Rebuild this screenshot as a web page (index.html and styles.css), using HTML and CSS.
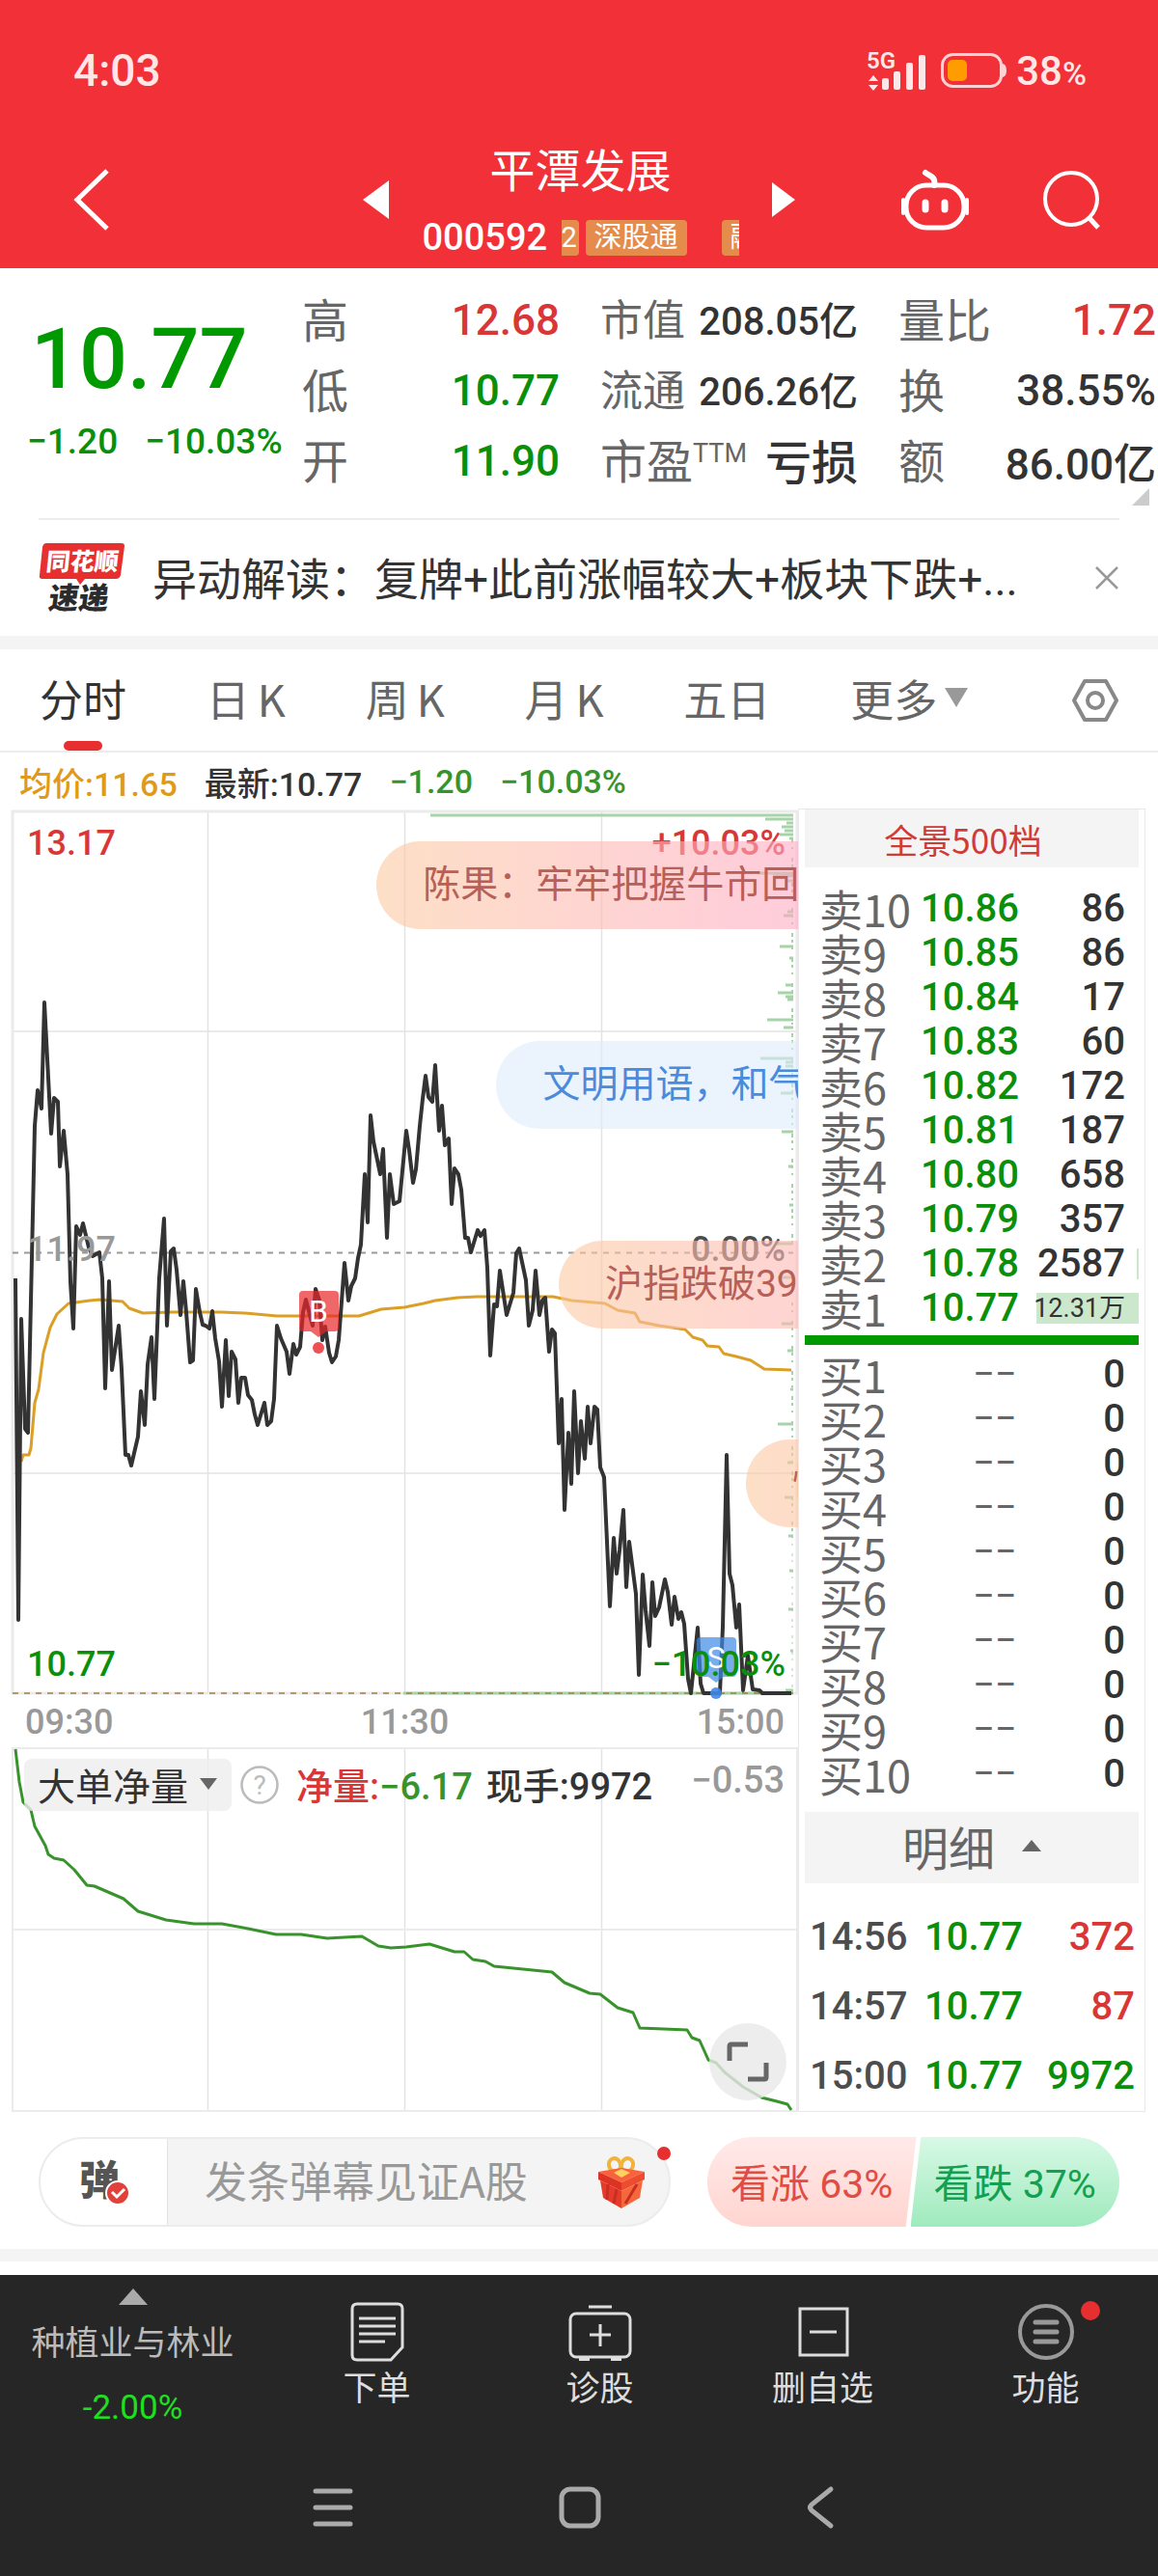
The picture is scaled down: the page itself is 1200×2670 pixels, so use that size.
FILE: index.html
```html
<!DOCTYPE html>
<html lang="zh-CN">
<head>
    <meta charset="UTF-8">
    <meta name="viewport" content="width=device-width, initial-scale=1.0">
    <title>平潭发展 000592</title>
    <link rel="stylesheet" href="styles.css">
</head>
<body>

    <!-- Header -->
    <header class="header">
        <div class="status-bar">
            <span class="clock">4:03</span>
            <div class="status-icons">
                <svg width="62" height="42" viewBox="0 0 62 42" fill="#ffe6e7">
                    <text x="0" y="19" font-size="24" font-weight="600">5G</text>
                    <path d="M7 26l5 6H2zM7 42l5-6H2z"/>
                    <rect x="16" y="29" width="7" height="12" rx="2"/>
                    <rect x="28" y="22" width="7" height="19" rx="2"/>
                    <rect x="41" y="13" width="7" height="28" rx="2"/>
                    <rect x="54" y="5" width="7" height="36" rx="2"/>
                </svg>
                <svg width="68" height="36" viewBox="0 0 68 36">
                    <rect x="1.500" y="1.500" width="61" height="33" rx="11" fill="none" stroke="#ffd3d5" stroke-width="3"/>
                    <rect x="7" y="7" width="20" height="22" rx="5" fill="#ff9d00"/>
                    <path d="M64 11q4 1 4 7t-4 7z" fill="#ffd3d5"/>
                </svg>
                <span class="battery">38<small>%</small></span>
            </div>
        </div>
        <div class="title-bar">
            <button class="icon-button" aria-label="返回">
                <svg width="38" height="66" viewBox="0 0 38 66"><path d="M35 3L4 33l31 30" fill="none" stroke="#fff" stroke-width="5"/></svg>
            </button>
            <div class="stock-switch">
                <button class="icon-button" aria-label="上一只">
                    <svg width="27" height="40" viewBox="0 0 27 40"><path d="M27 0v40L0 20z" fill="#fff"/></svg>
                </button>
                <div class="stock">
                    <h1>平潭发展</h1>
                    <div class="stock-code">
                        <span>000592</span>
                        <div class="tags">
                            <span class="tag tag-start">2</span>
                            <span class="tag">深股通</span>
                            <span class="tag tag-next">融</span>
                        </div>
                    </div>
                </div>
                <button class="icon-button" aria-label="下一只">
                    <svg width="24" height="36" viewBox="0 0 24 36"><path d="M0 0v36l24-18z" fill="#fff"/></svg>
                </button>
            </div>
            <div class="actions">
                <button class="icon-button" aria-label="智能助手">
                    <svg width="70" height="66" viewBox="0 0 70 66" fill="none" stroke="#fff" stroke-width="5">
                        <rect x="5" y="18" width="60" height="44" rx="21"/>
                        <path d="M34 18c2-9-4-9-9-13" stroke-width="6" stroke-linecap="round"/>
                        <path d="M2 33v14M68 33v14" stroke-width="4" stroke-linecap="round"/>
                        <path d="M25 36v7M45 36v7" stroke-width="7" stroke-linecap="round"/>
                    </svg>
                </button>
                <button class="icon-button" aria-label="搜索">
                    <svg width="62" height="62" viewBox="0 0 62 62" fill="none" stroke="#fff" stroke-width="4">
                        <circle cx="30" cy="30" r="27"/>
                        <path d="M48 49l10 11" stroke-width="5"/>
                    </svg>
                </button>
            </div>
        </div>
    </header>

    <!-- Quote -->
    <section class="quote">
        <div class="price-box">
            <div class="price">10.77</div>
            <div class="change"><span>−1.20</span><span>−10.03%</span></div>
        </div>
        <dl class="stats">
            <div><dt>高</dt><dd class="up">12.68</dd></div>
            <div><dt>低</dt><dd class="down">10.77</dd></div>
            <div><dt>开</dt><dd class="down">11.90</dd></div>
        </dl>
        <dl class="stats stats-value">
            <div><dt>市值</dt><dd>208.05亿</dd></div>
            <div><dt>流通</dt><dd>206.26亿</dd></div>
            <div><dt class="large">市盈<sup>TTM</sup></dt><dd class="large">亏损</dd></div>
        </dl>
        <dl class="stats">
            <div><dt>量比</dt><dd class="up">1.72</dd></div>
            <div><dt>换</dt><dd>38.55%</dd></div>
            <div><dt>额</dt><dd>86.00亿</dd></div>
        </dl>
        <svg class="corner" width="18" height="18" viewBox="0 0 18 18"><path d="M18 0v18H0z" fill="#ccc"/></svg>
    </section>

    <!-- News -->
    <section class="news">
        <svg class="news-logo" width="90" height="74" viewBox="0 0 90 74">
            <path d="M8 1h78q3 0 3 3l-4 30q-1 4-5 4H48l-5 6-4-6H4q-4 0-3-4L4 5q1-4 4-4z" fill="#e72f2f"/>
            <text x="10" y="29" font-size="25" font-weight="900" fill="#fff" transform="skewX(-6)" class="cjk">同花顺</text>
            <text x="19" y="69" font-size="31" font-weight="900" fill="#2b2b2b" transform="skewX(-8)" class="cjk">速递</text>
        </svg>
        <a href="#" class="news-title">异动解读：复牌+此前涨幅较大+板块下跌+...</a>
        <button class="icon-button" aria-label="关闭">
            <svg width="26" height="26" viewBox="0 0 26 26"><path d="M2 2l22 22M24 2L2 24" stroke="#999" stroke-width="2.500"/></svg>
        </button>
    </section>

    <!-- Period tabs -->
    <nav class="tabs">
        <button class="tab active">分时</button>
        <button class="tab">日<span>K</span></button>
        <button class="tab">周<span>K</span></button>
        <button class="tab">月<span>K</span></button>
        <button class="tab">五日</button>
        <button class="tab">更多<svg width="24" height="20" viewBox="0 0 24 20"><path d="M0 0h24L12 20z" fill="#999"/></svg></button>
        <button class="icon-button settings" aria-label="设置">
            <svg width="50" height="46" viewBox="0 0 50 46" fill="none" stroke="#888" stroke-width="4" stroke-linejoin="round">
                <path d="M14 3h22l11 20-11 20H14L3 23z"/>
                <circle cx="25" cy="23" r="8"/>
            </svg>
        </button>
    </nav>

    <main class="board">

        <!-- Charts -->
        <div class="charts">
            <div class="legend">
                <span class="average">均价:11.65</span>
                <span>最新:10.77</span>
                <span class="fall">−1.20</span>
                <span class="fall">−10.03%</span>
            </div>

            <div class="chart">
                <svg viewBox="0 840 827 918">
                    <g fill="none" stroke="#e3e3e3" stroke-width="1.500">
                        <path d="M215.500 841V1755M419.500 841V1755M623.500 841V1755M13 1069H826M13 1527H826"/>
                        <path d="M13 841H826V1755H13z" stroke="#ebebeb" stroke-width="3"/>
                    </g>
                    <path d="M13 1298.500H822" stroke="#999" stroke-width="2" stroke-dasharray="6 6"/>

                    <!-- Volume by price -->
                    <g stroke="#a6d3a8" stroke-width="3" fill="none">
                        <path d="M446 845h376M793 849h29M815 853h7M810 857h12M813 861h9M808 865h14M818 869h4M786 905h36M801 908h21M816 913h6M816 945h6M812 949h10M808 981h14M818 993h4M814 1021h8M806 1029h16M814 1033h8M816 1036h6M795 1057h27M812 1065h10M788 1097h34M814 1101h8M814 1105h8M805 1116h17M809 1133h13M810 1173h12M817 1209h5M818 1249h4M803 1289h19M806 1324h16M810 1372h12M816 1400h6M819 1440h3M806 1476h16M816 1516h6M813 1552h9M817 1592h5M818 1628h4M817 1668h5M819 1711h3M814 1752h8M418 1755h404"/>
                        <path d="M821 870V1290M821 1350V1600" stroke-width="2" stroke-dasharray="3 5 2 9 4 3"/>
                        <path d="M821 1600V1755" stroke-width="1" stroke-dasharray="2 8 3 4"/>
                    </g>
                    <path d="M13 1755H822" stroke="#9c7a33" stroke-width="2" stroke-dasharray="6 6" opacity="0.700"/>

                    <polyline class="line-average" points="22,1515 24,1508 30,1508 32,1501 36,1454 40,1440 45,1402 52,1376 59,1362 71,1351 93,1348 104,1347 127,1349 134,1356 148,1361 178,1360 229,1360 253,1361 287,1364 372,1364 395,1357 419,1355 439,1351 451,1348 474,1345 494,1344 573,1344 593,1348 627,1351 640,1358 658,1361 663,1370 683,1374 710,1378 718,1386 728,1389 733,1395 745,1396 750,1403 763,1406 778,1410 792,1419 820,1420"/>
                    <polyline class="line-price" points="16,1325 19,1679 22,1367 26,1481 29,1485 36,1167 39,1130 43,1149 46,1039 53,1175 56,1138 60,1142 62,1209 66,1172 70,1217 73,1329 76,1377 79,1271 83,1280 86,1268 92,1293 96,1302 103,1298 106,1325 109,1439 113,1328 116,1420 123,1374 126,1419 130,1508 133,1508 136,1519 143,1489 146,1442 150,1477 153,1414 157,1386 160,1450 165,1325 170,1263 173,1374 177,1297 180,1294 183,1316 187,1363 190,1328 193,1360 197,1412 200,1410 203,1336 207,1360 210,1373 213,1374 217,1377 220,1359 223,1387 227,1411 230,1458 234,1389 237,1447 240,1401 244,1409 247,1454 250,1428 254,1428 257,1446 261,1451 264,1466 267,1477 274,1454 277,1477 281,1473 284,1450 287,1374 291,1387 297,1401 300,1424 304,1393 307,1404 311,1396 314,1360 317,1347 321,1363 324,1374 327,1336 331,1348 334,1389 337,1375 341,1402 344,1412 348,1406 351,1389 357,1309 361,1348 364,1333 368,1325 371,1304 374,1290 378,1217 381,1267 384,1156 387,1183 394,1217 397,1191 401,1283 404,1217 408,1248 414,1245 421,1172 424,1192 428,1226 431,1212 435,1167 438,1139 441,1115 444,1137 448,1142 451,1104 455,1172 458,1146 461,1187 465,1180 468,1248 471,1211 475,1217 478,1233 482,1283 485,1283 488,1298 495,1275 498,1281 502,1275 505,1314 508,1405 512,1352 515,1354 518,1317 525,1363 532,1340 535,1299 538,1294 545,1327 548,1374 552,1358 555,1317 559,1363 562,1348 565,1345 569,1401 572,1378 575,1382 579,1496 582,1450 585,1565 589,1485 592,1538 595,1442 599,1527 602,1473 606,1512 609,1458 612,1496 616,1458 619,1461 622,1521 626,1531 632,1665 636,1594 639,1631 642,1607 646,1565 649,1645 652,1598 659,1652 662,1736 666,1632 669,1669 673,1706 676,1640 679,1675 683,1666 689,1637 692,1650 696,1684 699,1655 703,1678 706,1671 709,1683 713,1740 716,1755 723,1687 726,1745 729,1755 746,1755 749,1686 753,1508 756,1631 759,1643 763,1687 766,1663 770,1752 775,1716 780,1751 787,1752 790,1755 820,1755"/>

                    <!-- Buy and sell markers -->
                    <g fill="#e8262a">
                        <path d="M314 1338h33q4 0 4 4v34q0 4-4 4h-9l-8 6-8-6h-8q-4 0-4-4v-34q0-4 4-4z" opacity="0.700"/>
                        <circle cx="330" cy="1397" r="6" opacity="0.800"/>
                    </g>
                    <text x="330" y="1370" font-size="32" text-anchor="middle" fill="#fff">B</text>
                    <g fill="#3f8ae6">
                        <path d="M726 1697h33q4 0 4 4v33q0 4-4 4h-9l-8 6-8-6h-8q-4 0-4-4v-33q0-4 4-4z" opacity="0.700"/>
                        <circle cx="742" cy="1755" r="6" opacity="0.900"/>
                    </g>
                    <text x="742" y="1729" font-size="32" text-anchor="middle" fill="#fff">S</text>

                    <g class="axis">
                        <text x="28" y="886" fill="#d93636">13.17</text>
                        <text x="28" y="1307" fill="#999">11.97</text>
                        <text x="28" y="1737" fill="#0a8f0a">10.77</text>
                        <text x="814" y="886" fill="#d93636" text-anchor="end">+10.03%</text>
                        <text x="814" y="1307" fill="#4d4d4d" text-anchor="end">0.00%</text>
                        <text x="814" y="1737" fill="#0a8f0a" text-anchor="end">−10.03%</text>
                    </g>
                </svg>
                <div class="bullets">
                    <span class="bullet bullet-1">陈果：牢牢把握牛市回</span>
                    <span class="bullet bullet-2">文明用语，和气</span>
                    <span class="bullet bullet-3">沪指跌破39</span>
                    <span class="bullet bullet-4">情</span>
                </div>
            </div>

            <div class="times"><span>09:30</span><span>11:30</span><span>15:00</span></div>

            <div class="chart">
                <svg viewBox="0 1811 827 378">
                    <g fill="none" stroke="#e3e3e3" stroke-width="1.500">
                        <path d="M215.500 1812V2188M419.500 1812V2188M623.500 1812V2188"/>
                        <path d="M13 2000H826M13 1812H826V2188H13z" stroke="#ebebeb" stroke-width="2"/>
                    </g>
                    <polyline class="line-flow" points="16,1813 20,1847 24,1868 32,1876 36,1893 47,1913 50,1922 56,1926 66,1928 77,1938 90,1954 98,1955 128,1968 143,1981 172,1990 201,1994 230,1994 257,1999 286,2005 312,2005 339,2009 375,2007 392,2017 405,2019 421,2018 445,2015 471,2023 481,2023 490,2031 503,2033 512,2038 572,2044 585,2055 611,2066 622,2067 640,2081 656,2086 663,2102 712,2104 717,2112 725,2115 734,2135 742,2138 751,2148 770,2163 789,2174 805,2178 816,2181 820,2187"/>
                </svg>
                <div class="flow-info">
                    <button class="picker">大单净量<svg width="18" height="12" viewBox="0 0 18 12"><path d="M0 0h18L9 12z" fill="#666"/></svg></button>
                    <button class="icon-button" aria-label="说明">
                        <svg width="40" height="40" viewBox="0 0 40 40">
                            <circle cx="20" cy="20" r="18.500" fill="none" stroke="#bbb" stroke-width="2.500"/>
                            <text x="20" y="30" font-size="28" text-anchor="middle" fill="#bbb">?</text>
                        </svg>
                    </button>
                    <span class="flow-net"><span class="up">净量:</span><span class="fall">−6.17</span></span>
                    <span>现手:9972</span>
                    <span class="flow-max">−0.53</span>
                </div>
                <button class="expand" aria-label="全屏">
                    <svg width="44" height="42" viewBox="0 0 44 42" fill="none" stroke="#666" stroke-width="5"><path d="M3 20V5q0-2 2-2h17M41 22v15q0 2-2 2H22"/></svg>
                </button>
            </div>
        </div>

        <!-- Order book -->
        <aside class="book">
            <button class="book-head depth">全景500档</button>
            <table class="orders">
                <tr><th>卖10</th><td class="down">10.86</td><td>86</td></tr>
                <tr><th>卖9</th><td class="down">10.85</td><td>86</td></tr>
                <tr><th>卖8</th><td class="down">10.84</td><td>17</td></tr>
                <tr><th>卖7</th><td class="down">10.83</td><td>60</td></tr>
                <tr><th>卖6</th><td class="down">10.82</td><td>172</td></tr>
                <tr><th>卖5</th><td class="down">10.81</td><td>187</td></tr>
                <tr><th>卖4</th><td class="down">10.80</td><td>658</td></tr>
                <tr><th>卖3</th><td class="down">10.79</td><td>357</td></tr>
                <tr><th>卖2</th><td class="down">10.78</td><td class="sliver">2587</td></tr>
                <tr><th>卖1</th><td class="down">10.77</td><td class="filled">12.31万</td></tr>
            </table>
            <div class="divider"></div>
            <table class="orders bids">
                <tr><th>买1</th><td>−−</td><td>0</td></tr>
                <tr><th>买2</th><td>−−</td><td>0</td></tr>
                <tr><th>买3</th><td>−−</td><td>0</td></tr>
                <tr><th>买4</th><td>−−</td><td>0</td></tr>
                <tr><th>买5</th><td>−−</td><td>0</td></tr>
                <tr><th>买6</th><td>−−</td><td>0</td></tr>
                <tr><th>买7</th><td>−−</td><td>0</td></tr>
                <tr><th>买8</th><td>−−</td><td>0</td></tr>
                <tr><th>买9</th><td>−−</td><td>0</td></tr>
                <tr><th>买10</th><td>−−</td><td>0</td></tr>
            </table>
            <button class="book-head detail">明细<svg width="20" height="12" viewBox="0 0 20 12"><path d="M10 0l10 12H0z" fill="#666"/></svg></button>
            <table class="trades">
                <tr><td>14:56</td><td class="down">10.77</td><td class="up">372</td></tr>
                <tr><td>14:57</td><td class="down">10.77</td><td class="up">87</td></tr>
                <tr><td>15:00</td><td class="down">10.77</td><td class="down">9972</td></tr>
            </table>
        </aside>
    </main>

    <!-- Comment bar -->
    <section class="social">
        <div class="comment">
            <button class="comment-toggle" aria-label="弹幕开关">
                <svg width="52" height="50" viewBox="0 0 52 50">
                    <text x="0" y="38" font-size="42" font-weight="900" fill="#555" class="cjk">弹</text>
                    <circle cx="40" cy="36" r="12" fill="#e2403a" stroke="#fff" stroke-width="2"/>
                    <path d="M34 35l5 5 8-8" fill="none" stroke="#fff" stroke-width="3"/>
                </svg>
            </button>
            <input type="text" placeholder="发条弹幕见证A股" aria-label="弹幕">
            <button class="icon-button" aria-label="礼物">
                <svg width="50" height="54" viewBox="0 0 50 54">
                    <g fill="none" stroke="#f2b33a" stroke-width="4">
                        <ellipse cx="18" cy="9" rx="6" ry="7" transform="rotate(-18 18 9)"/>
                        <ellipse cx="31" cy="9" rx="6" ry="7" transform="rotate(18 31 9)"/>
                    </g>
                    <path d="M1 16l24-4 24 4-24 11z" fill="#f9623f"/>
                    <path d="M1 16l24 11v9L1 24z" fill="#dd3324"/>
                    <path d="M49 16L25 27v9l24-12z" fill="#ee4c2e"/>
                    <path d="M3 25l22 11v18L6 43z" fill="#e63a2b"/>
                    <path d="M47 25L25 36v18l19-11z" fill="#f4693c"/>
                    <path d="M11 29l-1 16M20 34l-3 15M41 29L29 49" stroke="#c92d23" stroke-width="3"/>
                    <path d="M17 17l8-4 9 4-9 5z" fill="#ffd25e"/>
                </svg>
            </button>
            <span class="dot"></span>
        </div>
        <div class="vote">
            <button class="vote-up">看涨 63%</button>
            <button class="vote-down">看跌 37%</button>
        </div>
    </section>

    <!-- Bottom menu -->
    <footer class="footer">
        <nav class="menu">
            <a href="#" class="sector">
                <svg width="30" height="17" viewBox="0 0 30 17"><path d="M15 0l15 17H0z" fill="#aaa"/></svg>
                <span>种植业与林业</span>
                <span class="sector-change">-2.00%</span>
            </a>
            <a href="#">
                <svg width="62" height="62" viewBox="0 0 62 62" fill="none" stroke="#ddd" stroke-width="3">
                    <path d="M10 2h42q5 0 5 5v40L45 60H10q-5 0-5-5V7q0-5 5-5z"/>
                    <path d="M12 17h38M12 25h38M12 33h38M12 41h27"/>
                </svg>
                <span>下单</span>
            </a>
            <a href="#">
                <svg width="66" height="62" viewBox="0 0 66 62" fill="none" stroke="#ddd" stroke-width="3">
                    <rect x="2" y="12" width="62" height="45" rx="6"/>
                    <path d="M21 5h24M33 23v23M22 34h22"/>
                    <path d="M11 59h11M44 59h11" stroke-width="4"/>
                </svg>
                <span>诊股</span>
            </a>
            <a href="#">
                <svg width="62" height="62" viewBox="0 0 62 62" fill="none" stroke="#ddd" stroke-width="3">
                    <path d="M7 7h49v48H7zM17 31h28"/>
                </svg>
                <span>删自选</span>
            </a>
            <a href="#">
                <svg width="62" height="62" viewBox="0 0 62 62" fill="none" stroke="#999" stroke-width="4">
                    <circle cx="31" cy="31" r="27"/>
                    <path d="M20 21h22M20 31h22M20 41h22" stroke-width="5" stroke-linecap="round"/>
                </svg>
                <span>功能</span>
                <i class="dot"></i>
            </a>
        </nav>
        <div class="system-nav">
            <button class="icon-button" aria-label="最近任务">
                <svg width="42" height="42" viewBox="0 0 42 42"><path d="M3 4h36M3 21h36M3 38h36" stroke="#aaa" stroke-width="5" stroke-linecap="round"/></svg>
            </button>
            <button class="icon-button" aria-label="主屏幕">
                <svg width="44" height="44" viewBox="0 0 44 44"><rect x="3" y="3" width="38" height="38" rx="9" fill="none" stroke="#aaa" stroke-width="5"/></svg>
            </button>
            <button class="icon-button" aria-label="后退">
                <svg width="28" height="44" viewBox="0 0 28 44"><path d="M25 3L5 19q-3 3 0 6l20 16" fill="none" stroke="#aaa" stroke-width="5" stroke-linecap="round"/></svg>
            </button>
        </div>
    </footer>

</body>
</html>
```

FILE: styles.css
```css
* {
    box-sizing: border-box;
}

body {
    margin: 0;
    font-family: Roboto, "Noto Sans CJK SC", sans-serif;
    color: #333;
    background-color: #fff;
}

button {
    padding: 0;
    border: none;
    background: none;
    font-family: inherit;
    color: inherit;
    cursor: pointer;
}

a {
    color: inherit;
    text-decoration: none;
}

svg {
    display: block;
    flex: none;
    overflow: visible;
}

table {
    border-collapse: collapse;
    width: 100%;
}

.cjk {
    font-family: "Noto Sans CJK SC", sans-serif;
}

.up {
    color: #d93636;
}

.down {
    color: #0a8f0a;
}

.fall {
    color: #38932c;
}

.icon-button {
    display: flex;
    flex: none;
}

.dot {
    position: absolute;
    border-radius: 50%;
    background-color: #e72f2f;
}

/* Header */
.header {
    background-color: #f13038;
    color: #fff;
}

.status-bar {
    display: flex;
    justify-content: space-between;
    align-items: center;
    height: 146px;
    padding: 0 74px 0 76px;
    color: #ffe6e7;
}

.clock {
    font-size: 46px;
    font-weight: 500;
}

.status-icons {
    display: flex;
    align-items: center;
    gap: 15px;
}

.battery {
    margin-left: -5px;
    font-size: 42px;
    font-weight: 500;
}

.battery small {
    font-size: 34px;
}

.title-bar {
    display: grid;
    grid-template-columns: 1fr 448px 1fr;
    align-items: center;
    height: 132px;
    padding-bottom: 16px;
}

.title-bar > .icon-button {
    padding-left: 76px;
}

.stock-switch {
    display: flex;
    justify-content: space-between;
    align-items: center;
}

.stock {
    width: 328px;
}

.stock h1 {
    margin: 0 0 14px;
    font-size: 47px;
    font-weight: 400;
    line-height: 64px;
    text-align: center;
}

.stock-code {
    display: flex;
    align-items: center;
    justify-content: space-between;
    height: 44px;
    font-size: 38px;
    font-weight: 500;
}

.tags {
    display: flex;
    gap: 7px;
    width: 184px;
    overflow: hidden;
}

.tag {
    flex: none;
    height: 37px;
    padding: 0 9px;
    border-radius: 4px;
    background-color: #e58c4c;
    font-size: 29px;
    font-weight: 400;
    line-height: 36px;
}

.tag-start {
    width: 18px;
    padding: 0;
    border-radius: 0 4px 4px 0;
}

.tag-next {
    margin-left: 29px;
}

.actions {
    display: flex;
    justify-content: flex-end;
    align-items: center;
    gap: 76px;
    padding-right: 58px;
}

/* Quote */
.quote {
    position: relative;
    display: grid;
    grid-template-columns: 271px 1fr 1fr 1fr;
    column-gap: 42px;
    height: 261px;
    padding: 17px 2px 0 0;
}

.quote::after {
    content: "";
    position: absolute;
    left: 40px;
    right: 40px;
    bottom: 0;
    height: 2px;
    background-color: #ececec;
}

.price-box {
    white-space: nowrap;
    color: #0a8f0a;
}

.price {
    padding: 26px 0 0 32px;
    font-size: 88px;
    font-weight: 500;
    line-height: 102px;
    color: #009900;
}

.change {
    display: flex;
    gap: 28px;
    padding: 12px 0 0 28px;
    font-size: 37px;
    font-weight: 500;
    line-height: 46px;
}

.stats {
    margin: 0;
}

.stats div {
    display: flex;
    justify-content: space-between;
    align-items: center;
    height: 73px;
    white-space: nowrap;
}

.stats dt {
    padding-bottom: 5px;
    font-size: 48px;
    color: #666;
}

.stats dd {
    margin: 0;
    font-size: 44px;
    font-weight: 500;
}

.stats-value dt {
    font-size: 44px;
}

.stats-value dd {
    padding-bottom: 3px;
    font-size: 40px;
}

.stats .large {
    font-size: 48px;
}

.stats sup {
    font-size: 27px;
    line-height: 0;
}

.corner {
    position: absolute;
    right: 9px;
    bottom: 15px;
}

/* News */
.news {
    display: flex;
    align-items: center;
    height: 120px;
    padding: 0 40px;
}

.news-title {
    flex: 1;
    padding: 0 0 5px 28px;
    font-size: 46px;
    white-space: nowrap;
}

/* Tabs */
.tabs {
    display: flex;
    justify-content: space-between;
    align-items: center;
    height: 121px;
    padding: 0 40px 0 41px;
    border-top: 14px solid #f4f4f4;
    border-bottom: 2px solid #ececec;
}

.tab {
    position: relative;
    display: flex;
    align-items: center;
    gap: 8px;
    height: 100%;
    padding-bottom: 5px;
    font-family: "Noto Sans CJK SC", sans-serif;
    font-size: 45px;
    color: #666;
}

.tab.active {
    color: #333;
}

.tab.active::after {
    content: "";
    position: absolute;
    left: 25px;
    right: 25px;
    bottom: 0;
    height: 10px;
    border-radius: 5px;
    background-color: #e72f2f;
}

.settings {
    margin-left: 24px;
}

/* Board */
.board {
    display: grid;
    grid-template-columns: 827fr 360fr;
    padding-right: 13px;
}

.legend {
    display: flex;
    align-items: center;
    gap: 28px;
    height: 60px;
    padding-left: 20px;
    font-size: 34px;
    font-weight: 500;
}

.average {
    color: #e09a18;
}

.chart {
    position: relative;
}

.chart > svg {
    width: 100%;
}

.line-price,
.line-average,
.line-flow {
    fill: none;
    stroke-width: 4;
    stroke-linejoin: round;
}

.line-price {
    stroke: #333;
}

.line-average {
    stroke: #dc9f26;
    stroke-width: 3;
}

.line-flow {
    stroke: #38932c;
    stroke-width: 3;
}

.axis {
    font-size: 36px;
    font-weight: 500;
}

/* Scrolling comments over the chart */
.bullets {
    position: absolute;
    top: 0;
    right: 0;
    bottom: 0;
    left: 0;
    overflow: hidden;
}

.bullet {
    position: absolute;
    padding: 0 48px;
    border-radius: 46px;
    font-size: 39px;
    line-height: 91px;
    white-space: nowrap;
    color: #b85f58;
    background-image: linear-gradient(90deg, rgba(252, 201, 160, 0.6), rgba(255, 170, 196, 0.6) 440px);
}

.bullet-1 {
    top: 3.5%;
    left: 47.2%;
}

.bullet-2 {
    top: 26%;
    left: 62.2%;
    color: #4a8bdc;
    background: rgba(222, 235, 252, 0.6);
}

.bullet-3 {
    top: 48.6%;
    left: 70%;
}

.bullet-4 {
    top: 71%;
    left: 93.5%;
}

.times {
    display: flex;
    justify-content: space-between;
    align-items: center;
    height: 53px;
    padding: 0 14px 0 26px;
    font-size: 36px;
    font-weight: 500;
    color: #999;
}

.flow-info {
    position: absolute;
    top: 12px;
    left: 25px;
    right: 14px;
    display: flex;
    align-items: center;
    height: 54px;
    font-size: 38px;
    font-weight: 500;
    white-space: nowrap;
}

.flow-info > span {
    padding-bottom: 4px;
}

.picker {
    display: flex;
    align-items: center;
    gap: 12px;
    height: 54px;
    margin-right: 9px;
    padding: 0 15px 3px 14px;
    border-radius: 8px;
    background-color: rgba(238, 238, 238, 0.8);
    font-size: 39px;
}

.flow-net {
    margin: 0 14px 0 18px;
}

.flow-info .flow-max {
    margin-left: auto;
    padding-bottom: 10px;
    color: #999;
}

.expand {
    position: absolute;
    right: 12px;
    bottom: 12px;
    display: flex;
    justify-content: center;
    align-items: center;
    width: 80px;
    height: 80px;
    border-radius: 50%;
    background-color: rgba(232, 232, 232, 0.8);
}

/* Order book */
.book {
    margin-top: 58px;
    padding: 0 6px;
    border: 1px solid #e8e8e8;
}

.book-head {
    display: flex;
    justify-content: center;
    align-items: center;
    width: 100%;
    background-color: #f4f4f4;
}

.depth {
    height: 60px;
    margin-bottom: 20px;
    padding: 0 18px 0 0;
    font-family: "Noto Sans CJK SC", sans-serif;
    font-size: 35px;
    color: #cf3b35;
}

.detail {
    gap: 28px;
    height: 74px;
    margin: 16px 0 19px;
    padding-bottom: 4px;
    font-size: 48px;
    color: #666;
}

.orders tr {
    height: 46px;
}

.orders th,
.orders td {
    padding: 0;
    line-height: 46px;
}

.orders th {
    width: 120px;
    padding-left: 15px;
    font-family: "Noto Sans CJK SC", sans-serif;
    font-size: 45px;
    font-weight: 400;
    text-align: left;
    color: #666;
}

.orders td {
    font-size: 40px;
    font-weight: 500;
    text-align: right;
}

.orders td:nth-child(2) {
    width: 100px;
}

.orders td:last-child {
    padding-right: 14px;
}

.orders .sliver,
.orders .filled {
    background: linear-gradient(#cce8cc, #cce8cc) right center / 2px 32px no-repeat;
}

.orders .filled {
    background-size: 106px 32px;
    font-size: 27px;
    font-weight: 400;
}

.bids td:nth-child(2) {
    font-weight: 400;
    color: #666;
}

.divider {
    height: 10px;
    margin: 5px 0 8px;
    background-color: #009900;
}

.trades td {
    height: 72px;
    padding: 0 4px 0 5px;
    font-size: 40px;
    font-weight: 500;
}

.trades td:first-child {
    color: #4d4d4d;
}

.trades td:last-child {
    text-align: right;
}

/* Comment bar */
.social {
    display: flex;
    justify-content: space-between;
    height: 155px;
    padding: 26px 40px 23px;
    border-bottom: 13px solid #f4f4f4;
}

.comment {
    position: relative;
    display: flex;
    align-items: center;
    flex: 0 1 655px;
    min-width: 0;
    padding-right: 24px;
    border: 2px solid #ececec;
    border-radius: 47px;
    background-color: #f4f4f4;
}

.comment-toggle {
    display: flex;
    flex: none;
    align-items: center;
    justify-content: center;
    width: 132px;
    height: 100%;
    border-right: 1px solid #e3e3e3;
    border-radius: 45px 0 0 45px;
    background-color: #fff;
}

.comment input {
    flex: 1;
    min-width: 0;
    padding: 0 0 5px 38px;
    border: none;
    background: none;
    font-family: "Noto Sans CJK SC", sans-serif;
    font-size: 44px;
}

.comment input::placeholder {
    color: #999;
}

.comment .dot {
    top: 8px;
    right: -2px;
    width: 14px;
    height: 14px;
}

.vote {
    display: flex;
    flex: 0 1 427px;
}

.vote button {
    flex: 1;
    padding-bottom: 3px;
    font-size: 41px;
}

.vote .vote-up {
    margin-right: -3px;
    border-radius: 46px 0 0 46px;
    background-image: linear-gradient(#ffeae9, #ffd5d0);
    clip-path: polygon(0 0, 100% 0, 95% 100%, 0 100%);
    color: #e14d43;
}

.vote .vote-down {
    margin-left: -3px;
    border-radius: 0 46px 46px 0;
    background-image: linear-gradient(#d8f9e6, #9feabd);
    clip-path: polygon(5% 0, 100% 0, 100% 100%, 0 100%);
    color: #12a150;
}

/* Bottom menu */
.footer {
    margin-top: 14px;
    background-color: #262626;
    color: #ddd;
}

.menu {
    display: grid;
    grid-template-columns: 275px repeat(4, 1fr);
    height: 170px;
    padding-right: 1px;
}

.menu a {
    position: relative;
    display: flex;
    flex-direction: column;
    align-items: center;
    gap: 4px;
    padding-top: 28px;
    font-size: 35px;
    line-height: 50px;
}

.menu .sector {
    gap: 16px;
    padding-top: 14px;
    color: #bbb;
}

.menu .sector-change {
    color: #1fe01f;
}

.menu .dot {
    top: 27px;
    left: 66%;
    width: 20px;
    height: 20px;
}

.system-nav {
    display: flex;
    justify-content: space-between;
    align-items: center;
    height: 142px;
    padding: 0 28% 0 27%;
}
```
